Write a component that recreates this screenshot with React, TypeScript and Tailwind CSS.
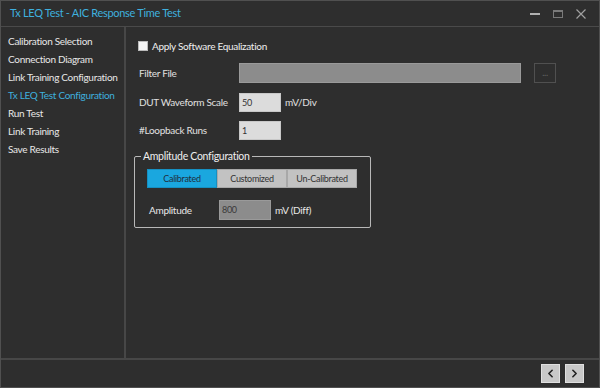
import { ChevronLeft, ChevronRight } from 'lucide-react';

const navItems = [
  'Calibration Selection',
  'Connection Diagram',
  'Link Training Configuration',
  'Tx LEQ Test Configuration',
  'Run Test',
  'Link Training',
  'Save Results',
];

export default function App() {
  const active = 'Tx LEQ Test Configuration';

  return (
    <div
      className="w-[600px] h-[388px] bg-[#2e2e2e] text-[#e6e6e6] flex flex-col border border-[#505050] overflow-hidden whitespace-nowrap tracking-[-0.3px]"
      style={{ fontFamily: 'Lato, "Noto Sans", sans-serif' }}
    >
      {/* Title bar */}
      <div className="h-[26px] flex items-center justify-between pl-[9px] pr-[12px] border-b border-[#4a4a4a] shrink-0">
        <span className="text-[11px] text-[#3fb0de]">Tx LEQ Test - AIC Response Time Test</span>
        <div className="flex items-center gap-[11px]">
          <div className="w-[12px] h-[12px] flex items-center justify-center">
            <div className="w-[10px] h-[2px] bg-[#b0b0b0]" />
          </div>
          <div className="w-[12px] h-[12px] flex items-center justify-center">
            <div className="w-[10px] h-[8px] border border-[#7a7a7a] border-t-2" />
          </div>
          <svg width="12" height="12" viewBox="0 0 12 12">
            <path d="M1.5 1.5 L10.5 10.5 M10.5 1.5 L1.5 10.5" stroke="#a0a0a0" strokeWidth="1.2" />
          </svg>
        </div>
      </div>

      {/* Body */}
      <div className="flex flex-1 min-h-0">
        {/* Sidebar */}
        <div className="w-[125px] shrink-0 border-r-2 border-[#474747] pt-[5px] pl-[7px]">
          {navItems.map((item) => (
            <div
              key={item}
              className={`h-[18px] flex items-center text-[10px] ${
                item === active ? 'text-[#3fb0de]' : 'text-[#e8e8e8]'
              }`}
            >
              {item}
            </div>
          ))}
        </div>

        {/* Content */}
        <div className="flex-1 pl-[12px] pt-[12px] text-[10px]">
          <label className="flex items-center gap-[4px] h-[14px]">
            <span className="w-[10px] h-[10px] bg-[#f4f4f4] border border-[#bbb]" />
            <span className="text-[#eeeeee]">Apply Software Equalization</span>
          </label>

          <div className="flex items-center mt-[10px] h-[20px]">
            <span className="w-[101px] pl-[1px] text-[#e0e0e0]">Filter File</span>
            <div className="w-[282px] h-[20px] bg-[#8c8c8c] border border-[#9a9a9a]" />
            <div className="ml-[13px] w-[22px] h-[20px] border border-[#505050] flex items-center justify-center text-[#666] text-[9px]">
              ...
            </div>
          </div>

          <div className="flex items-center mt-[10px] h-[19px]">
            <span className="w-[101px] pl-[1px] text-[#e0e0e0]">DUT Waveform Scale</span>
            <div className="w-[42px] h-[19px] bg-[#dcdcdc] border border-[#c8c8c8] text-[#333] text-[9px] pl-[2px] flex items-center">
              50
            </div>
            <span className="ml-[4px] text-[#e0e0e0]">mV/Div</span>
          </div>

          <div className="flex items-center mt-[9px] h-[19px]">
            <span className="w-[101px] pl-[1px] text-[#e0e0e0]">#Loopback Runs</span>
            <div className="w-[42px] h-[19px] bg-[#dcdcdc] border border-[#c8c8c8] text-[#333] text-[9px] pl-[2px] flex items-center">
              1
            </div>
          </div>

          {/* Group box */}
          <fieldset className="mt-[9px] ml-[-4px] w-[237px] h-[79px] border border-[#b8b8b8] rounded-[2px] px-[12px] pt-[6px]">
            <legend className="px-[2px] ml-[-6px] text-[10.5px] text-[#eeeeee] leading-[14px]">Amplitude Configuration</legend>
            <div className="flex">
              <div className="w-[70px] h-[19px] bg-[#1aa7df] border border-[#1690c2] text-[#1f2f40] text-[9px] flex items-center justify-center">
                Calibrated
              </div>
              <div className="w-[70px] h-[19px] bg-[#c2c2c2] border border-[#a8a8a8] text-[#333] text-[9px] flex items-center justify-center">
                Customized
              </div>
              <div className="w-[70px] h-[19px] bg-[#c2c2c2] border border-[#a8a8a8] text-[#333] text-[9px] flex items-center justify-center">
                Un-Calibrated
              </div>
            </div>
            <div className="flex items-center mt-[12px] h-[20px]">
              <span className="w-[72px] pl-[2px] text-[#e8e8e8]">Amplitude</span>
              <div className="w-[52px] h-[20px] bg-[#8c8c8c] border border-[#9a9a9a] text-[#3a3a3a] text-[9px] pl-[2px] flex items-center">
                800
              </div>
              <span className="ml-[4px] text-[#e8e8e8]">mV (Diff)</span>
            </div>
          </fieldset>
        </div>
      </div>

      {/* Footer */}
      <div className="h-[29px] shrink-0 border-t-2 border-[#474747] flex items-center justify-end pr-[15px] gap-[5px]">
        <button className="w-[19px] h-[19px] bg-[#c8c8c8] border border-[#e0e0e0] flex items-center justify-center">
          <ChevronLeft size={13} strokeWidth={3} color="#222" />
        </button>
        <button className="w-[19px] h-[19px] bg-[#c8c8c8] border border-[#e0e0e0] flex items-center justify-center">
          <ChevronRight size={13} strokeWidth={3} color="#222" />
        </button>
      </div>
    </div>
  );
}
